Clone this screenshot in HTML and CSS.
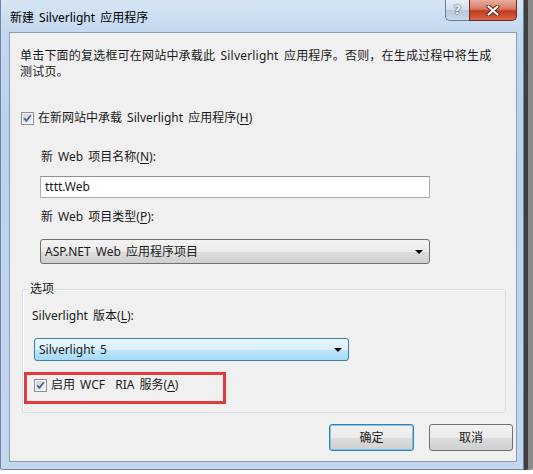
FILE: index.html
```html
<!DOCTYPE html>
<html lang="zh-CN">
<head>
<meta charset="utf-8">
<title>新建 Silverlight 应用程序</title>
<link rel="stylesheet" href="styles.css">
</head>
<body>
<div class="window">
  <div class="titlebar">
    <span class="title">新建 Silverlight 应用程序</span>
    <div class="caption-btns">
      <span class="cap-help">?</span>
      <span class="cap-close">
        <svg width="14" height="11" viewBox="0 0 14 11">
          <path d="M2.5 1.5 L11.5 9.5 M11.5 1.5 L2.5 9.5" stroke="#5a2418" stroke-width="4" stroke-linecap="round" fill="none"/>
          <path d="M2.5 1.5 L11.5 9.5 M11.5 1.5 L2.5 9.5" stroke="#ffffff" stroke-width="2.2" stroke-linecap="round" fill="none"/>
        </svg>
      </span>
    </div>
  </div>
  <div class="client">
    <p class="desc">单击下面的复选框可在网站中承载此 Silverlight 应用程序。否则，在生成过程中将生成<br>测试页。</p>
    <div class="check host">
      <svg class="cb" width="13" height="13" viewBox="0 0 13 13">
        <defs><linearGradient id="cbg" x1="0" y1="0" x2="1" y2="1"><stop offset="0" stop-color="#cbd3dd"/><stop offset="1" stop-color="#f1f4f7"/></linearGradient></defs>
        <rect x=".5" y=".5" width="12" height="12" fill="#f6f6f6" stroke="#8f8f8f"/>
        <rect x="2" y="2" width="9" height="9" fill="url(#cbg)"/>
        <path d="M3.2 6.2 L5.4 8.8 L9.8 3.2" fill="none" stroke="#4c5f8c" stroke-width="1.7"/>
      </svg>
      <span>在新网站中承载 Silverlight 应用程序(<u>H</u>)</span>
    </div>
    <div class="web">
      <div class="lbl lbl-name">新 Web 项目名称(<u>N</u>):</div>
      <div class="textbox">tttt.Web</div>
      <div class="lbl lbl-type">新 Web 项目类型(<u>P</u>):</div>
      <div class="combo combo-type"><span>ASP.NET Web 应用程序项目</span><span class="arrow"></span></div>
    </div>
    <fieldset class="group">
      <legend>选项</legend>
      <div class="lbl lbl-ver">Silverlight 版本(<u>L</u>):</div>
      <div class="combo combo-ver"><span>Silverlight 5</span><span class="arrow"></span></div>
      <div class="mark">
        <div class="check">
          <svg class="cb" width="13" height="13" viewBox="0 0 13 13">
            <rect x=".5" y=".5" width="12" height="12" fill="#f6f6f6" stroke="#8f8f8f"/>
            <rect x="2" y="2" width="9" height="9" fill="url(#cbg)"/>
            <path d="M3.2 6.2 L5.4 8.8 L9.8 3.2" fill="none" stroke="#4c5f8c" stroke-width="1.7"/>
          </svg>
          <span>启用 WCF&nbsp; RIA 服务(<u>A</u>)</span>
        </div>
      </div>
    </fieldset>
    <div class="buttons">
      <button class="btn btn-default">确定</button>
      <button class="btn">取消</button>
    </div>
  </div>
</div>
</body>
</html>
```

FILE: styles.css
```css
* { box-sizing: border-box; }

html, body {
  margin: 0;
  padding: 0;
  background: #ffffff;
}

body {
  font-family: "Noto Sans", "Noto Sans CJK SC", sans-serif;
  font-size: 12px;
  line-height: 16px;
  word-spacing: 2px;
  color: #1a1a1a;
}

.window {
  width: 524px;
  height: 470px;
  display: flex;
  flex-direction: column;
  padding: 0 6px 7px 8px;
  border: 1px solid #6f86a3;
  border-top: none;
  border-radius: 0 0 2px 2px;
  background: linear-gradient(180deg, #d7e6f6 0px, #c4d8ef 30px, #bcd2ec 120px, #c3d7ee 470px);
  box-shadow: 4px 0 0 #3e3e3e, 9px 0 0 #8a8a8a;
}

.titlebar {
  height: 32px;
  display: flex;
  justify-content: space-between;
  align-items: flex-start;
  flex: none;
}

.title {
  margin-top: 10px;
  padding-left: 1px;
  color: #000;
}

.caption-btns {
  display: flex;
  height: 21px;
}

.cap-help {
  width: 24px;
  height: 21px;
  border: 1px solid #6b7f99;
  border-top: none;
  border-right: none;
  border-radius: 0 0 0 5px;
  background: linear-gradient(180deg, #e7eef7 0%, #d2deec 48%, #b7c9de 52%, #cad9eb 100%);
  color: #eef3f9;
  font-family: "DejaVu Sans", sans-serif;
  font-weight: bold;
  font-size: 13px;
  line-height: 19px;
  text-align: center;
  text-shadow: 0 0 1px #3b4c63, 0 0 2px #3b4c63;
}

.cap-close {
  width: 48px;
  height: 21px;
  border: 1px solid #6a2b22;
  border-top: none;
  border-radius: 0 0 5px 0;
  background: linear-gradient(180deg, #e9ad9f 0%, #d87966 45%, #c2391f 55%, #d8674c 100%);
  display: flex;
  align-items: center;
  justify-content: center;
}

.client {
  flex: 1;
  border: 1px solid #8a9db6;
  background: #f0f0f0;
  display: flex;
  flex-direction: column;
}

.desc {
  margin: 0;
  padding: 15px 0 0 10px;
  white-space: nowrap;
  letter-spacing: 0.2px;
}

.check {
  display: flex;
  align-items: center;
  gap: 4px;
  height: 16px;
}

.cb { flex: none; display: block; }

.host {
  margin: 30px 0 0 11px;
}

.web {
  padding-left: 30px;
}

.lbl { padding-left: 1px; }

.lbl-name { margin-top: 23px; }
.lbl-type { margin-top: 11px; }

.textbox {
  margin-top: 11px;
  width: 390px;
  height: 22px;
  background: #ffffff;
  border: 1px solid #abadb3;
  border-top-color: #8e9196;
  padding: 2px 4px;
  line-height: 16px;
}

.combo {
  display: flex;
  align-items: center;
  justify-content: space-between;
  border-radius: 3px;
  padding: 0 6px 0 4px;
}

.combo-type {
  margin-top: 14px;
  width: 390px;
  height: 25px;
  border: 1px solid #707070;
  background: linear-gradient(180deg, #f3f3f3 0%, #ebebeb 50%, #dddddd 51%, #cfcfcf 100%);
}

.arrow {
  width: 0;
  height: 0;
  border-left: 4px solid transparent;
  border-right: 4px solid transparent;
  border-top: 4px solid #000;
}

.group {
  margin: 17px 0 0 12px;
  width: 484px;
  padding: 0 0 8px 0;
  border: 1px solid #d5dfe5;
  border-radius: 3px;
  box-shadow: inset 1px 1px 0 #ffffff;
}

.group legend {
  margin-left: 7px;
  padding: 0;
  line-height: 16px;
}

.lbl-ver {
  margin: 11px 0 0 9px;
  padding-left: 0;
}

.combo-ver {
  margin: 14px 0 0 11px;
  width: 315px;
  height: 23px;
  border: 1px solid #3c7fb1;
  background: linear-gradient(180deg, #eaf6fd 0%, #d9f0fc 50%, #bee6fd 51%, #a7d9f5 100%);
}

.mark {
  margin: 11px 0 0 1px;
  width: 202px;
  height: 32px;
  border: 3px solid #e23a3f;
  padding: 2px 0 0 7px;
}

.buttons {
  margin-top: 11px;
  display: flex;
  justify-content: flex-end;
  gap: 15px;
  padding-right: 3px;
}

.btn {
  font: inherit;
  color: #1a1a1a;
  width: 84px;
  height: 27px;
  border: 1px solid #707070;
  border-radius: 3px;
  background: linear-gradient(180deg, #f2f2f2 0%, #ebebeb 50%, #dddddd 51%, #cfcfcf 100%);
  padding: 0;
}

.btn-default {
  width: 85px;
  border-color: #3c7fb1;
  box-shadow: inset 0 0 0 1px #7ec4e8;
}

u { text-decoration-thickness: 1px; text-underline-offset: 2px; }
```
